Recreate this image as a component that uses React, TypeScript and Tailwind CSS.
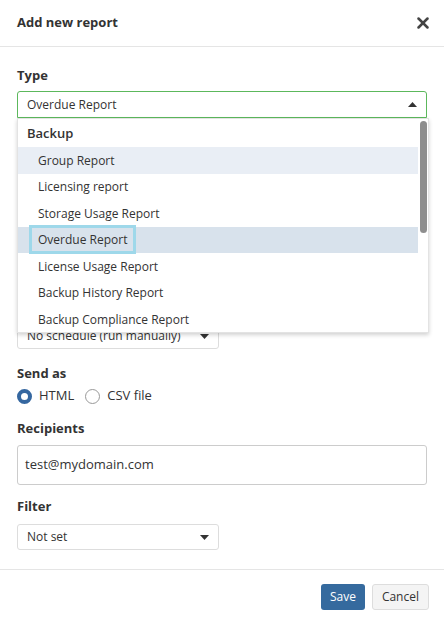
import { X } from "lucide-react";

const reportTypes = [
  "Group Report",
  "Licensing report",
  "Storage Usage Report",
  "Overdue Report",
  "License Usage Report",
  "Backup History Report",
  "Backup Compliance Report",
];

function Caret({ up = false }: { up?: boolean }) {
  return (
    <svg width="9" height="5" viewBox="0 0 9 5" className="shrink-0 text-[#333]">
      {up ? <path d="M0 5L4.5 0L9 5Z" fill="currentColor" /> : <path d="M0 0L4.5 5L9 0Z" fill="currentColor" />}
    </svg>
  );
}

function Label({ children, className = "" }: { children?: React.ReactNode; className?: string }) {
  return <div className={"h-[18px] text-[13px] font-bold leading-[18px] text-[#333] " + className}>{children}</div>;
}

export default function App() {
  return (
    <div className="w-[444px] h-[623px] bg-white font-['Open_Sans',sans-serif] text-[#333] flex flex-col">
      {/* header */}
      <div className="h-[47px] border-b border-[#e5e5e5] flex items-center justify-between pl-[17px] pr-[12px] shrink-0">
        <h2 className="text-[13px] font-bold">Add new report</h2>
        <X size={18} strokeWidth={3.4} className="text-[#444]" />
      </div>

      {/* body */}
      <div className="relative flex-1 px-[17px] pt-[19px]">
        <Label>Type</Label>
        <div className="mt-[7px] h-[27px] border border-[#5cb85c] rounded-t-[3px] flex items-center justify-between pl-[9px] pr-[9px] text-[12px]">
          <span>Overdue Report</span>
          <Caret up />
        </div>

        {/* fields covered by the open list */}
        <Label className="mt-[15px]" />
        <div className="mt-[7px] h-[40px] border border-[#ccc] rounded-[3px]" />
        <Label className="mt-[15px]" />
        <div className="mt-[7px] h-[40px] border border-[#ccc] rounded-[3px]" />
        <Label className="mt-[20px]" />
        <div className="mt-[7px] w-[202px] h-[26px] border border-[#ddd] rounded-[3px] flex items-center justify-between pl-[9px] pr-[9px] text-[12px]">
          <span>No schedule (run manually)</span>
          <Caret />
        </div>

        <Label className="mt-[15px]">Send as</Label>
        <div className="mt-[4px] h-[20px] flex items-center text-[13px]">
          <span className="w-[15px] h-[15px] rounded-full border-[4.5px] border-[#3567a0] bg-white" />
          <span className="ml-[7px]">HTML</span>
          <span className="ml-[11px] w-[15px] h-[15px] rounded-full border border-[#999] bg-white" />
          <span className="ml-[7px]">CSV file</span>
        </div>

        <Label className="mt-[13px]">Recipients</Label>
        <div className="mt-[8px] h-[40px] border border-[#ccc] rounded-[3px] flex items-center pl-[7px] text-[13px]">
          test@mydomain.com
        </div>

        <Label className="mt-[12px]">Filter</Label>
        <div className="mt-[9px] w-[202px] h-[26px] border border-[#ddd] rounded-[3px] flex items-center justify-between pl-[9px] pr-[9px] text-[12px]">
          <span>Not set</span>
          <Caret />
        </div>

        {/* open dropdown list */}
        <div className="absolute left-[17px] top-[71px] w-[412px] h-[215px] bg-white border border-[#e3e3e3] shadow-[0_2px_4px_rgba(0,0,0,0.18)] flex overflow-hidden">
          <div className="flex-1 text-[12px] pt-[0px]">
            <div className="h-[28px] flex items-center pl-[9px] font-semibold text-[13px] pt-[1px]">Backup</div>
            {reportTypes.map((t) => {
              const hover = t === "Group Report";
              const sel = t === "Overdue Report";
              return (
                <div
                  key={t}
                  className={
                    "h-[26.5px] flex items-center pl-[14px] " +
                    (hover ? "bg-[#e9eef5]" : sel ? "bg-[#d8e2ec]" : "")
                  }
                >
                  <span
                    className={
                      "px-[6px] py-[4px] leading-[15px] " + (sel ? "shadow-[0_0_0_3px_#9ed8ea]" : "")
                    }
                  >
                    {t}
                  </span>
                </div>
              );
            })}
          </div>
          <div className="w-[10px] pt-[2px] flex justify-center">
            <div className="w-[7px] h-[112px] rounded-full bg-[#8e8e8e]" />
          </div>
        </div>
      </div>

      {/* footer */}
      <div className="h-[54px] border-t border-[#e5e5e5] flex items-center justify-end gap-[7px] pr-[15px] shrink-0">
        <button className="h-[26px] px-[9px] rounded-[3px] bg-[#356a9e] text-white text-[12px]">Save</button>
        <button className="h-[26px] px-[9px] rounded-[3px] bg-[#f4f4f4] border border-[#ddd] text-[12px]">Cancel</button>
      </div>
    </div>
  );
}
